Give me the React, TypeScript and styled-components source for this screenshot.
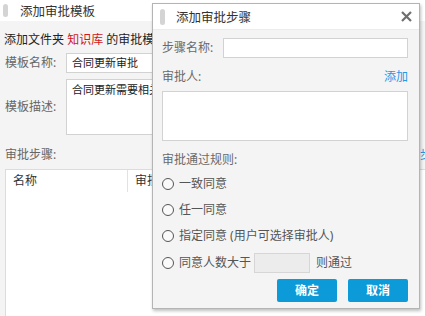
import React from 'react'
import styled, { createGlobalStyle } from 'styled-components'

const GlobalStyle = createGlobalStyle`
  html, body {
    margin: 0;
    padding: 0;
    background: #f4f4f4;
    overflow: hidden;
  }
  body {
    font-family: "Noto Sans", "Noto Sans CJK SC", sans-serif;
    font-size: 12px;
  }
`

const rules = ['一致同意', '任一同意', '指定同意 (用户可选择审批人)']

const App: React.FC = () => (
  <Page>
    <GlobalStyle />
    <TopBar>
      <Pill />
      <TopTitle>添加审批模板</TopTitle>
    </TopBar>
    <Content>
      <Intro>
        添加文件夹 <Red>知识库</Red> 的审批模板，设置审批步骤
      </Intro>
      <FormRow>
        <Label>模板名称:</Label>
        <Field>合同更新审批</Field>
      </FormRow>
      <FormRow>
        <Label>模板描述:</Label>
        <AreaField>合同更新需要相关负责人审批</AreaField>
      </FormRow>
      <StepsHead>
        <Label>审批步骤:</Label>
        <StepLink>添加步骤</StepLink>
      </StepsHead>
      <Table>
        <HeadRow>
          <HeadCell $width={122}>名称</HeadCell>
          <HeadCell $width={160}>审批人</HeadCell>
        </HeadRow>
      </Table>
    </Content>

    <Dialog>
      <DialogHead>
        <Pill $tall />
        <DialogTitle>添加审批步骤</DialogTitle>
        <Close>
          <svg width="11" height="11" viewBox="0 0 11 11">
            <path d="M1 1L10 10M10 1L1 10" stroke="#6f6f6f" strokeWidth="2.2" />
          </svg>
        </Close>
      </DialogHead>
      <DialogBody>
        <FormRow>
          <DialogLabel>步骤名称:</DialogLabel>
          <Input />
        </FormRow>
        <ApproverRow>
          <DialogLabel>审批人:</DialogLabel>
          <AddLink>添加</AddLink>
        </ApproverRow>
        <ApproverBox />
        <RuleTitle>审批通过规则:</RuleTitle>
        <RadioList>
          {rules.map(r => (
            <RadioRow key={r}>
              <Radio />
              <RadioText>{r}</RadioText>
            </RadioRow>
          ))}
          <RadioRow $last>
            <Radio />
            <RadioText>同意人数大于</RadioText>
            <CountBox />
            <RadioText>则通过</RadioText>
          </RadioRow>
        </RadioList>
        <Buttons>
          <Button>确定</Button>
          <Button>取消</Button>
        </Buttons>
      </DialogBody>
    </Dialog>
  </Page>
)

const Page = styled.div`
  position: relative;
  width: 425px;
  height: 316px;
  overflow: hidden;
  background: #f4f4f4;
`

const TopBar = styled.div`
  height: 21px;
  background: #fff;
  display: flex;
  align-items: center;
  padding-left: 3px;
`

const Pill = styled.span<{ $tall?: boolean }>`
  width: 5px;
  height: ${p => (p.$tall ? 16 : 13)}px;
  border-radius: 3px;
  background: #d4d4d4;
`

const TopTitle = styled.span`
  margin-left: 12px;
  font-size: 12.5px;
  color: #333;
`

const Content = styled.div`
  width: 460px;
  padding: 0 0 0 5px;
`

const Intro = styled.div`
  margin-top: 11px;
  margin-left: -1px;
  line-height: 16px;
  color: #222;
  white-space: nowrap;
`

const Red = styled.span`
  color: #d0161b;
`

const FormRow = styled.div`
  display: flex;
  align-items: center;
  margin-top: 5px;

  &:first-of-type {
    margin-top: 0;
  }
`

const Label = styled.span`
  width: 61px;
  flex-shrink: 0;
  color: #666;
  line-height: 16px;
`

const Field = styled.div`
  box-sizing: border-box;
  width: 300px;
  height: 20px;
  padding-left: 5px;
  background: #fff;
  border: 1px solid #d2d2d2;
  color: #222;
  font-size: 11px;
  line-height: 18px;
`

const AreaField = styled(Field)`
  height: 56px;
  padding-top: 1px;
  margin-top: 1px;
`

const StepsHead = styled.div`
  display: flex;
  align-items: center;
  margin-top: 12px;
`

const StepLink = styled.span`
  margin-left: 330px;
  color: #2797e4;
  line-height: 16px;
`

const Table = styled.div`
  box-sizing: border-box;
  width: 440px;
  height: 160px;
  margin-top: 6px;
  background: #fff;
  border: 1px solid #dcdcdc;
`

const HeadRow = styled.div`
  display: flex;
  height: 22px;
`

const HeadCell = styled.div<{ $width: number }>`
  width: ${p => p.$width}px;
  padding-left: 7px;
  box-sizing: border-box;
  border-right: 1px solid #e2e2e2;
  color: #333;
  line-height: 22px;
`

const Dialog = styled.div`
  position: absolute;
  left: 152px;
  top: 3px;
  width: 268px;
  height: 306px;
  box-sizing: border-box;
  border: 1px solid #b4b4b4;
  background: #f4f4f4;
  box-shadow: 1px 2px 3px rgba(0, 0, 0, 0.25);
`

const DialogHead = styled.div`
  height: 25px;
  display: flex;
  align-items: center;
  padding: 0 7px;
  background: #fff;
  border-bottom: 1px solid #ececec;
`

const DialogTitle = styled.span`
  margin-left: 11px;
  font-size: 12.5px;
  color: #333;
`

const Close = styled.span`
  margin-left: auto;
  display: flex;
`

const DialogBody = styled.div`
  padding: 8px 11px 0 9px;
`

const DialogLabel = styled(Label)`
  color: #6a6a6a;
`

const Input = styled.div`
  flex: 1;
  height: 20px;
  box-sizing: border-box;
  background: #fff;
  border: 1px solid #d2d2d2;
`

const ApproverRow = styled.div`
  display: flex;
  justify-content: space-between;
  margin-top: 11px;
`

const AddLink = styled.span`
  color: #2797e4;
  line-height: 16px;
`

const ApproverBox = styled.div`
  height: 50px;
  box-sizing: border-box;
  margin-top: 6px;
  background: #fff;
  border: 1px solid #d2d2d2;
`

const RuleTitle = styled.div`
  margin-top: 11px;
  line-height: 16px;
  color: #6a6a6a;
`

const RadioList = styled.div`
  display: flex;
  flex-direction: column;
  gap: 6px;
  margin-top: 6px;
`

const RadioRow = styled.div<{ $last?: boolean }>`
  display: flex;
  align-items: center;
  height: 20px;
  margin-top: ${p => (p.$last ? 1 : 0)}px;
`

const Radio = styled.span`
  width: 12px;
  height: 12px;
  box-sizing: border-box;
  border-radius: 50%;
  border: 1.5px solid #555;
  background: #fafafa;
  margin-right: 5px;
`

const RadioText = styled.span`
  color: #555;
  line-height: 16px;
`

const CountBox = styled.div`
  width: 56px;
  height: 20px;
  box-sizing: border-box;
  margin: 0 6px 0 3px;
  background: #ececec;
  border: 1px solid #d6d6d6;
`

const Buttons = styled.div`
  display: flex;
  justify-content: flex-end;
  gap: 11px;
  margin-top: 6px;
`

const Button = styled.div`
  width: 60px;
  height: 23px;
  border-radius: 2px;
  background: #0c9ad8;
  color: #fff;
  font-size: 12px;
  font-weight: bold;
  text-align: center;
  line-height: 23px;
`

export default App
